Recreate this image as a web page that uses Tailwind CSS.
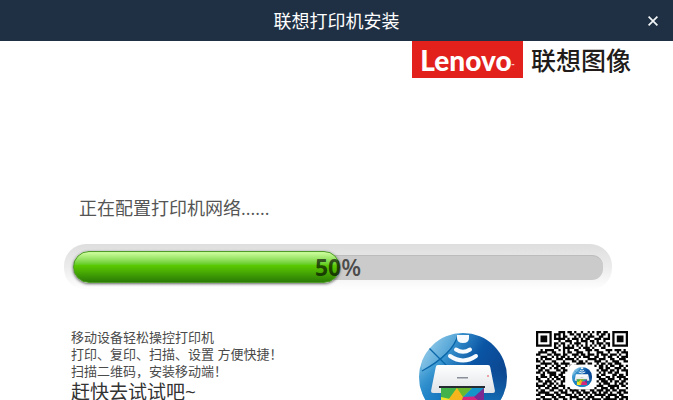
<!DOCTYPE html>
<html lang="zh-CN">
<head>
<meta charset="utf-8">
<meta name="viewport" content="width=device-width, initial-scale=1">
<title>联想打印机安装</title>
<script src="https://cdn.jsdelivr.net/npm/@tailwindcss/browser@4"></script>
</head>
<body class="bg-white font-['Open_Sans','Noto_Sans_CJK_SC',sans-serif]">
<div class="flex h-screen flex-col overflow-hidden">
  <header class="grid h-[41px] shrink-0 grid-cols-[1fr_auto_1fr] items-center bg-[#203044] text-white">
    <h1 class="col-start-2 text-[18px] leading-6">联想打印机安装</h1>
    <button type="button" aria-label="关闭" class="mr-3 flex size-4 items-center justify-center justify-self-end">
      <svg viewBox="0 0 10 10" class="size-[10px]" fill="none" stroke="#f2f5f8" stroke-width="1.7"><path d="M.6.6 9.4 9.4M9.4.6.6 9.4"/></svg>
    </button>
  </header>

  <main class="flex shrink-0 flex-col">
    <div class="flex items-center justify-end gap-2 pr-[42px]">
      <div class="flex h-[37px] w-[111px] items-center justify-center bg-[#e2211c] font-[Lato] text-[28px] leading-8 font-black text-white">Lenovo<span class="mt-3 text-[4px] leading-3">™</span></div>
      <div class="text-[25px] leading-8 font-medium text-[#211b1a]">联想图像</div>
    </div>

    <p id="status" class="mt-[118px] pl-[79px] text-[18px] leading-6 text-[#555]">正在配置打印机网络......</p>

    <div class="mt-6 mr-[61px] ml-16 rounded-[22px] bg-linear-to-b from-[#dedede] via-[#ececec] to-white px-[9px] py-[7px]">
      <div role="progressbar" aria-labelledby="status" aria-valuenow="50" aria-valuemin="0" aria-valuemax="100" class="relative flex h-8 items-center">
        <div class="h-[25px] w-full rounded-[11px] border-t border-[#bcbcbc] bg-[#cbcbcb]"></div>
        <div class="absolute inset-y-0 left-0 rounded-full border border-[#4f9a28] bg-linear-to-b from-[#c5f994] from-5% via-[#5bc900] via-45% to-[#2b7d05] shadow-[0_1px_3px_#0009]" style="width:50.4%"></div>
        <div class="absolute inset-0 flex items-center justify-center text-[23px] leading-8 font-bold text-black/65">50<span class="font-semibold">%</span></div>
      </div>
    </div>

    <section class="mt-[39px] flex items-start pr-[45px] pl-[71px]">
      <div class="grow text-[13px] leading-[17px] text-[#4a4a4a]">
        <p>移动设备轻松操控打印机</p>
        <p>打印、复印、扫描、设置 方便快捷！</p>
        <p>扫描二维码，安装移动端！</p>
        <p class="text-[19px] leading-6 text-[#333]">赶快去试试吧~</p>
      </div>
      <svg id="app" viewBox="0 0 88 88" class="mt-1 size-[88px] shrink-0" role="img" aria-label="联想打印应用">
        <defs>
          <linearGradient id="sky" x1="0" y1="0" x2="1" y2=".6"><stop offset="0" stop-color="#a3d7f0"/><stop offset=".3" stop-color="#3e9bd3"/><stop offset=".6" stop-color="#0a55a5"/><stop offset="1" stop-color="#0d4189"/></linearGradient>
          <linearGradient id="low" x1="0" y1="0" x2="0" y2="1"><stop offset=".4" stop-color="#1672bb" stop-opacity="0"/><stop offset="1" stop-color="#1590d5"/></linearGradient>
          <linearGradient id="shell" x1="0" y1="0" x2="0" y2="1"><stop offset="0" stop-color="#fff"/><stop offset="1" stop-color="#dfe2e6"/></linearGradient>
          <clipPath id="disc"><circle cx="44" cy="44" r="44"/></clipPath>
        </defs>
        <g id="emblem">
          <g clip-path="url(#disc)">
            <path fill="url(#sky)" d="M0 0h88v88H0z"/><path fill="url(#low)" d="M0 0h88v88H0z"/>
            <path d="M40 0Q36 18 3 38L0 0Z" fill="#fff" opacity=".17"/>
            <path d="M10 15 28 33M39 2Q34 21 3 38" fill="none" stroke="#0967aa" stroke-width="1.3"/>
            <path d="M38 2h12v3q0 5-6 5t-6-5z" fill="#f7fbff"/>
            <path d="M37 16.500Q44 21 51 16.500M31 23Q44 32 57 23" fill="none" stroke="#f7fbff" stroke-width="4" stroke-linecap="round"/>
          </g>
          <path d="M19 32h50q2 0 2.200 2L76 58q0 2-2 2H14q-2 0-2-2l4.800-24q.2-2 2.200-2Z" fill="url(#shell)"/>
          <path d="M38 44h11v1.500H38z" fill="#888f98"/><circle cx="69" cy="43" r="1" fill="#e98b8b"/>
          <path d="M20 53h46v2H20z" fill="#252a31"/>
          <path d="M22 55h43v24H22z" fill="#b9d51b"/>
          <path d="M22 55h16l-8 11-8 8z" fill="#44b24a"/><path d="m22 64 9 2 8 13H22z" fill="#efe42b"/>
          <path d="m38 55 6 9-5 15-9-13z" fill="#f6b51c"/><path d="M38 55h15l-9 9z" fill="#6ab82d"/>
          <path d="M53 55h12v9H44z" fill="#1594c9"/><path d="m44 64 21-1v16H39z" fill="#d7267e"/><path d="m55 64 10-9v17z" fill="#7a2a91"/>
        </g>
      </svg>
      <svg viewBox="0 0 82 82" class="mt-[2px] ml-[29px] size-[92px] shrink-0" role="img" aria-label="二维码">
        <path id="modules" fill="#050505"/>
        <rect x="30" y="30" width="22" height="22" rx="2" fill="#fff"/>
        <use href="#emblem" transform="translate(32 32) scale(.205)"/>
      </svg>
    </section>
  </main>
</div>
<script>
const rows = [
"11111110001110110100100101011011001111111",
"10000010111010011011011010010110101000001",
"10111010101011000101010111001100101011101",
"10111010111110101110101100111011101011101",
"10111010001001110010111011010010001011101",
"10000010110110010111001001011101101000001",
"11111110101010101010101010101010101111111",
"00000000110011111001011101000110000000000",
"00101111001010100110001110110001110111010",
"01111001100010110011100100011100100010111",
"11000110111011001110110111010111011101001",
"00111001010110100101011100110010110010111",
"10101110011101111010000111101110011001110",
"11010001100010001101101000111001001110011",
"00111110110111100011110110010110110111000",
"11001001011001010110000000101101011001101",
"10110010110110000000000000001101100111010",
"01101100011011000000000000010111011010111",
"11010111100110000000000000001010110110001",
"00110011101100000000000000010110001101101",
"10111010110110000000000000011001101011110",
"11000101011010000000000000001110111001011",
"01101110100110000000000000010111010110110",
"10011011010100000000000000001011100101101",
"11110110101110000000000000011100111110110",
"01001101110010110101001110100111011010001",
"10110011001101011110110011011101101101110",
"01111100110111001011011101101011010011011",
"11001111011001110101101010111110111101100",
"00110001101110011110010111000101100110111",
"11011110110011010011101101111011111101101",
"01100111001101101100110010110110010010110",
"10111010111010110111011101001101111111001",
"00000000110111001101010110110111000110110",
"11111110011010111010111010011101010111001",
"10000010101101100111001101110011000101110",
"10111010110010111010110111011101111110101",
"10111010011101001101101001101110100111011",
"10111010101110110010111110110011011001101",
"10000010110011101111001011011101101110010",
"11111110011101010010110110101110110011101"];
document.getElementById("modules").setAttribute("d", rows.map((row, y) =>
  [...row].map((bit, x) => bit === "1" ? `M${x * 2} ${y * 2}h2v2h-2z` : "").join("")).join(""));
</script>
</body>
</html>
